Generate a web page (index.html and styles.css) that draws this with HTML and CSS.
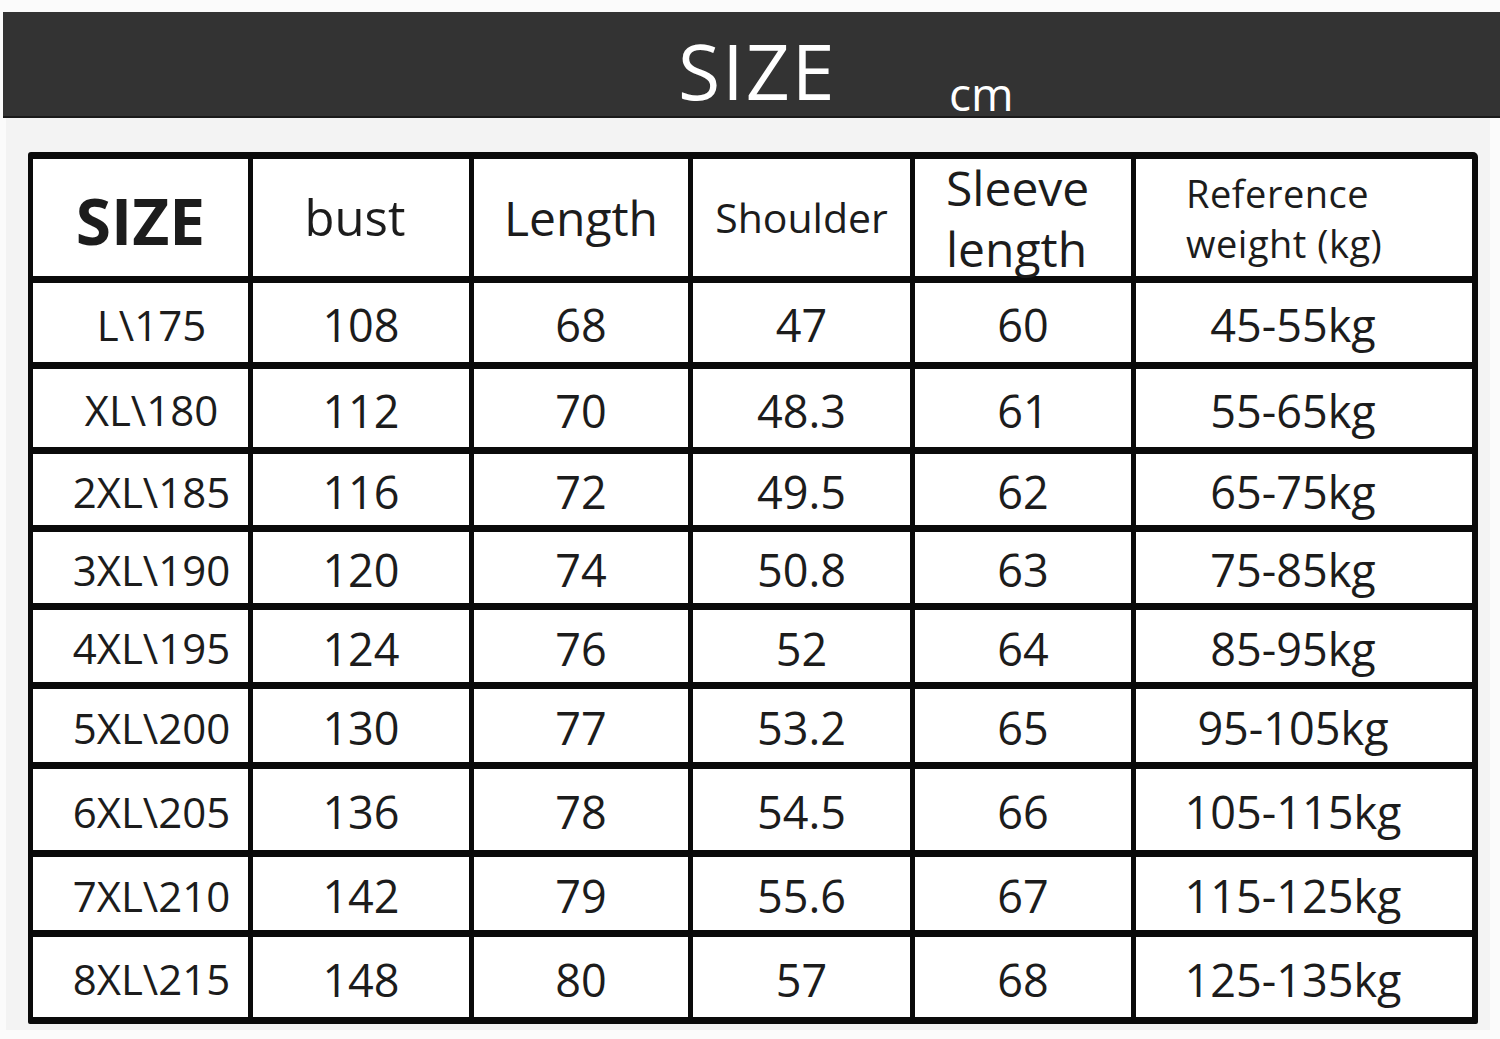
FILE: index.html
```html
<!DOCTYPE html>
<html>
<head>
<meta charset="utf-8">
<link rel="stylesheet" href="styles.css">
</head>
<body>
<div class="page">
  <div class="topbar">
    <span class="title">SIZE</span>
    <span class="unit">cm</span>
  </div>
  <div class="panel">
    <div class="grid">
      <div class="cell head size">SIZE</div>
      <div class="cell head bust">bust</div>
      <div class="cell head">Length</div>
      <div class="cell head small">Shoulder</div>
      <div class="cell head two">Sleeve<br>length</div>
      <div class="cell head ref">Reference<br>weight (kg)</div>

      <div class="cell sz">L\175</div><div class="cell">108</div><div class="cell">68</div><div class="cell">47</div><div class="cell">60</div><div class="cell kg">45-55kg</div>
      <div class="cell sz">XL\180</div><div class="cell">112</div><div class="cell">70</div><div class="cell">48.3</div><div class="cell">61</div><div class="cell kg">55-65kg</div>
      <div class="cell sz">2XL\185</div><div class="cell">116</div><div class="cell">72</div><div class="cell">49.5</div><div class="cell">62</div><div class="cell kg">65-75kg</div>
      <div class="cell sz">3XL\190</div><div class="cell">120</div><div class="cell">74</div><div class="cell">50.8</div><div class="cell">63</div><div class="cell kg">75-85kg</div>
      <div class="cell sz">4XL\195</div><div class="cell">124</div><div class="cell">76</div><div class="cell">52</div><div class="cell">64</div><div class="cell kg">85-95kg</div>
      <div class="cell sz">5XL\200</div><div class="cell">130</div><div class="cell">77</div><div class="cell">53.2</div><div class="cell">65</div><div class="cell kg">95-105kg</div>
      <div class="cell sz">6XL\205</div><div class="cell">136</div><div class="cell">78</div><div class="cell">54.5</div><div class="cell">66</div><div class="cell kg">105-115kg</div>
      <div class="cell sz">7XL\210</div><div class="cell">142</div><div class="cell">79</div><div class="cell">55.6</div><div class="cell">67</div><div class="cell kg">115-125kg</div>
      <div class="cell sz">8XL\215</div><div class="cell">148</div><div class="cell">80</div><div class="cell">57</div><div class="cell">68</div><div class="cell kg">125-135kg</div>
    </div>
  </div>
</div>
</body>
</html>
```

FILE: styles.css
```css
html, body {
  margin: 0;
  padding: 0;
  background: #fbfbfb;
}
.page {
  width: 1500px;
  height: 1039px;
  padding-top: 12px;
  box-sizing: border-box;
  font-family: "Open Sans", "Noto Sans", sans-serif;
  color: #1c1c1c;
}
.topbar {
  margin-left: 3px;
  height: 106px;
  background: #333333;
  border-bottom: 2px solid #1a1a1a;
  box-sizing: border-box;
  position: relative;
  color: #ffffff;
}
.title {
  position: absolute;
  left: 675px;
  top: 20px;
  font-size: 77px;
  line-height: 1;
  font-weight: 400;
  letter-spacing: 2px;
}
.unit {
  position: absolute;
  left: 946px;
  top: 58px;
  font-size: 46px;
  line-height: 1;
}
.panel {
  margin: 0 10px 0 6px;
  background: #f3f3f3;
  padding: 34px 0 10px 22px;
  height: 912px;
  box-sizing: border-box;
}
.grid {
  display: grid;
  width: 1450px;
  box-sizing: border-box;
  grid-template-columns: 215px 216px 214px 217px 216px 336px;
  grid-template-rows: 117px 79px 78px 71px 71px 72px 73px 81px 73px 80px;
  column-gap: 5px;
  row-gap: 7px;
  padding: 7px 6px 7px 5px;
  background: #0a0a0a;
  border-radius: 3px 5px 2px 2px;
}
.cell {
  background: #ffffff;
  display: flex;
  align-items: center;
  justify-content: center;
  font-size: 45px;
  line-height: 1;
  padding-top: 4px;
  box-sizing: border-box;
}
.sz {
  font-size: 42px;
  padding-left: 22px;
}
.kg {
  padding-right: 22px;
}
.head {
  font-size: 48px;
  padding-top: 0;
}
.bust {
  padding-right: 12px;
  font-size: 49px;
}
.size {
  font-weight: 700;
  font-size: 64px;
  padding-top: 6px;
}
.small {
  font-size: 41px;
}
.two {
  text-align: left;
  justify-content: flex-start;
  padding-left: 31px;
  line-height: 61px;
  font-size: 48px;
}
.ref {
  text-align: left;
  justify-content: flex-start;
  padding-left: 50px;
  font-size: 38px;
  line-height: 50px;
  padding-top: 0;
  letter-spacing: 0.5px;
}
```
